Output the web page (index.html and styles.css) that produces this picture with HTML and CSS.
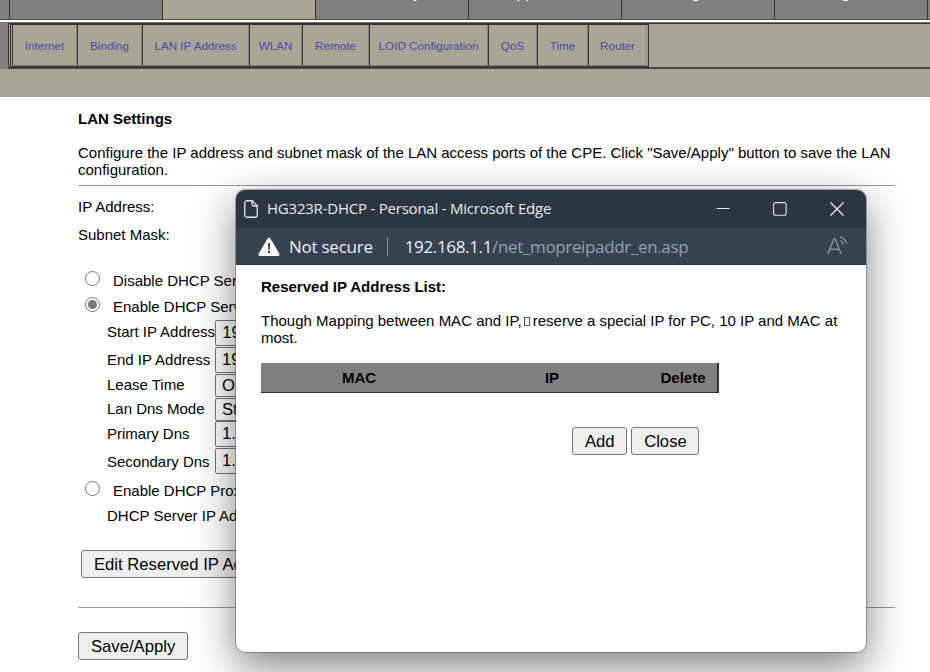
FILE: index.html
```html
<!DOCTYPE html>
<html lang="en">
<head>
<meta charset="utf-8">
<title>LAN Settings</title>
<link rel="stylesheet" href="styles.css">
</head>
<body>
<nav class="topnav">
  <div class="tab"><span>Status</span></div>
  <div class="tab tab-active"><span>Network</span></div>
  <div class="tab"><span>Security</span></div>
  <div class="tab"><span>Application</span></div>
  <div class="tab"><span>Management</span></div>
  <div class="tab"><span>Diagnose</span></div>
</nav>
<div class="topline"></div>
<div class="subwrap">
  <div class="subnav">
    <div class="subtable">
      <a class="cell c1">Internet</a>
      <a class="cell c2">Binding</a>
      <a class="cell c3">LAN IP Address</a>
      <a class="cell c4">WLAN</a>
      <a class="cell c5">Remote</a>
      <a class="cell c6">LOID Configuration</a>
      <a class="cell c7">QoS</a>
      <a class="cell c8">Time</a>
      <a class="cell c9">Router</a>
    </div>
  </div>
</div>
<div class="band"></div>
<main class="main">
  <h1 class="title">LAN Settings</h1>
  <p class="desc">Configure the IP address and subnet mask of the LAN access ports of the CPE. Click "Save/Apply" button to save the LAN configuration.</p>
  <div class="rule rule-top"></div>
  <div class="row row-ip">IP Address:</div>
  <div class="row row-ip">Subnet Mask:</div>
  <label class="radio-row rr1"><input type="radio" name="d"><span>Disable DHCP Server</span></label>
  <label class="radio-row rr2"><input type="radio" name="d" checked><span>Enable DHCP Server</span></label>
  <div class="dhcp">
    <div class="dhcp-row h27"><span class="lbl">Start IP Address</span><input class="fld" value="192.168.1.2"></div>
    <div class="dhcp-row h27"><span class="lbl lbl-flat">End IP Address</span><input class="fld" value="192.168.1.254"></div>
    <div class="dhcp-row h23 first-sel"><span class="lbl">Lease Time</span><select class="sel"><option>One Day</option></select></div>
    <div class="dhcp-row h24"><span class="lbl">Lan Dns Mode</span><select class="sel"><option>Static</option></select></div>
    <div class="dhcp-row h26"><span class="lbl">Primary Dns</span><input class="fld" value="1.1.1.1"></div>
    <div class="dhcp-row h28"><span class="lbl lbl-flat">Secondary Dns</span><input class="fld" value="1.0.0.1"></div>
  </div>
  <label class="radio-row rr3"><input type="radio" name="d"><span>Enable DHCP Proxy</span></label>
  <div class="row proxy-ip">DHCP Server IP Address</div>
  <button class="btn btn-edit" type="button">Edit Reserved IP Address</button>
  <div class="rule rule-bottom"></div>
  <button class="btn btn-save" type="button">Save/Apply</button>
</main>

<section class="win">
  <header class="win-title">
    <svg class="ico-doc" width="14" height="18" viewBox="0 0 14 18"><path d="M3 .75h5.2L13.25 5.8V15A2.25 2.25 0 0 1 11 17.25H3A2.25 2.25 0 0 1 .75 15V3A2.25 2.25 0 0 1 3 .75Z" fill="none" stroke="#e6e8ea" stroke-width="1.3"/><path d="M8 1v3.2A1.8 1.8 0 0 0 9.8 6H13" fill="none" stroke="#e6e8ea" stroke-width="1.3"/></svg>
    <span class="win-name">HG323R-DHCP - Personal - Microsoft Edge</span>
    <div class="win-ctrls">
      <svg width="14" height="14" viewBox="0 0 14 14"><path d="M.5 6.5h13" stroke="#eceef0" stroke-width="1.1"/></svg>
      <svg width="14" height="14" viewBox="0 0 14 14"><rect x=".6" y=".6" width="12.6" height="12.6" rx="2" fill="none" stroke="#dfe2e5" stroke-width="1.1"/></svg>
      <svg width="14" height="14" viewBox="0 0 14 14"><path d="M.5.5l13 13M13.5.5l-13 13" stroke="#f2f3f4" stroke-width="1.2"/></svg>
    </div>
  </header>
  <div class="win-addr">
    <svg class="ico-warn" width="22" height="19" viewBox="0 0 22 19"><path d="M11 .8a1.6 1.6 0 0 1 1.4.8l9 15.2a1.5 1.5 0 0 1-1.3 2.2H1.9a1.5 1.5 0 0 1-1.3-2.2l9-15.2A1.6 1.6 0 0 1 11 .8Z" fill="#fff"/><path d="M10 6.2h2l-.3 6.6h-1.4Z" fill="#2f3947"/><circle cx="11" cy="15" r="1.2" fill="#2f3947"/></svg>
    <span class="not-secure">Not secure</span>
    <span class="addr-sep"></span>
    <span class="url"><span class="url-host">192.168.1.1</span>/net_mopreipaddr_en.asp</span>
    <svg class="ico-read" width="21" height="20" viewBox="0 0 21 20"><path d="M.8 18 6.9 3h1.2l6.1 15M3 13.3h9" fill="none" stroke="#8b929c" stroke-width="1.4"/><path d="M13 1c3.4.8 5.6 3 6.4 6.4M12.8 4.4c1.8.5 3 1.7 3.5 3.6" fill="none" stroke="#8b929c" stroke-width="1.4"/></svg>
  </div>
  <div class="win-body">
    <h2 class="win-h">Reserved IP Address List:</h2>
    <p class="win-p">Though Mapping between MAC and IP,<span class="tofu"></span>reserve a special IP for PC, 10 IP and MAC at most.</p>
    <div class="list-head"><span>MAC</span><span>IP</span><span class="del">Delete</span></div>
    <div class="win-btns">
      <button class="btn btn-add" type="button">Add</button>
      <button class="btn btn-close" type="button">Close</button>
    </div>
  </div>
</section>
</body>
</html>
```
FILE: styles.css
```css
* { box-sizing: border-box; }
html, body { margin: 0; padding: 0; height: 672px; overflow: hidden; background: #fff; }
body { font-family: "Liberation Sans", Arial, sans-serif; font-size: 15px; color: #000; position: relative; }

/* top tabs */
.topnav { display: flex; height: 20px; padding-left: 9px; background: #808080; border-bottom: 1px solid #4a4a4a; overflow: hidden; }
.tab { flex: 0 0 153px; height: 19px; border-right: 1px solid #333; display: flex; justify-content: center; align-items: flex-end; padding-bottom: 18px; color: #fff; font-size: 16px; line-height: 16px; }
.tab:first-child { flex-basis: 154px; border-left: 1px solid #333; }
.tab-active { background: #a9a696; color: #a9a696; }
.topline { height: 3px; background: #fff; border-bottom: 1px solid #777; }

/* secondary nav */
.subwrap { background: #808080; padding-left: 8px; height: 46px; }
.subnav { height: 46px; background: #a9a696; border-top: 1px solid #333; border-left: 1px solid #333; border-bottom: 2px solid #444; padding-left: 1px; }
.subtable { display: flex; width: 639px; height: 43px; border: 1px solid #333; padding: 0 0 1px 1px; }
.cell { display: flex; align-items: center; justify-content: center; height: 41px; padding-top: 1px; border-left: 1px solid #333; border-right: 1px solid #808080; border-bottom: 1px solid #808080; color: #4a48a8; font-size: 11.67px; }
.c1 { width: 65px; } .c2 { width: 65px; } .c3 { width: 107px; } .c4 { width: 53px; } .c5 { width: 67px; }
.c6 { width: 119px; } .c7 { width: 49px; } .c8 { width: 51px; } .c9 { width: 59px; }
.band { height: 28px; background: #a9a696; }

/* main page */
.main { margin-left: 3px; padding: 13px 35px 0 75px; background: #fff; height: 575px; }
.title { margin: 0; font-size: 15px; line-height: 17px; font-weight: 700; }
.desc { margin: 17px 0 0; line-height: 17px; }
.rule { height: 1px; background: #999; }
.rule-top { margin-top: 7px; margin-bottom: 7px; }
.row { display: flex; align-items: center; height: 28px; padding-bottom: 2px; }
.radio-row { display: flex; align-items: center; height: 26px; }
.radio-row input { width: 15px; height: 15px; margin: 0 13px 5px 7px; flex: none; accent-color: #777; }
.radio-row span { padding-bottom: 2px; }
.rr1 { margin-top: 19px; }
.rr2 { height: 25px; }
.rr2 span { padding-bottom: 0; }
.dhcp { padding-left: 29px; }
.dhcp-row { display: flex; align-items: center; }
.h27 { height: 27px; } .h23 { height: 23px; } .h24 { height: 24px; } .h26 { height: 26px; } .h28 { height: 28px; }
.first-sel { margin-top: 1px; }
.lbl { flex: 0 0 108px; white-space: nowrap; padding-bottom: 2px; }
.lbl-flat { padding-bottom: 0; }
.fld { width: 200px; height: 26px; padding: 1px 6px; margin: 0; font: 16.67px "Liberation Sans", Arial, sans-serif; border: 1px solid #767676; border-radius: 2px; background: #fff; }
.sel { width: 200px; height: 23px; padding: 0 2px; margin: 0; font: 16.67px "Liberation Sans", Arial, sans-serif; border: 1px solid #767676; border-radius: 2px; background: #fff; }
.rr3 { margin-top: 3px; }
.proxy-ip { padding-left: 29px; height: 24px; }
.btn { font: 16.67px "Liberation Sans", Arial, sans-serif; color: #000; background: #efefef; border: 1px solid #767676; border-radius: 3px; height: 28px; padding: 2px 11.5px 0 12px; margin: 0; white-space: nowrap; display: block; }
.btn-edit { margin: 22px 0 0 3px; }
.rule-bottom { margin-top: 29px; }
.btn-save { margin-top: 24px; }

/* floating browser window */
.win { position: absolute; left: 236px; top: 190px; width: 630px; height: 462px; background: #fff; border-radius: 9px; overflow: hidden; box-shadow: 0 0 0 1px rgba(90,90,90,.5), 0 14px 42px rgba(0,0,0,.5); }
.win-title { display: flex; align-items: center; height: 38px; padding: 0 22px 0 8px; background: #2c3642; color: #e9ebed; }
.ico-doc { flex: none; margin-top: -1px; }
.win-name { margin: -2px 0 0 9px; font-family: "Open Sans", sans-serif; font-size: 15px; white-space: nowrap; letter-spacing: -.22px; }
.win-ctrls { margin-left: auto; display: flex; gap: 43px; }
.win-addr { display: flex; align-items: center; height: 37px; padding: 0 18px 0 22px; background: #364252; border-bottom: 1px solid #2c3642; color: #eef0f2; font-family: "Open Sans", sans-serif; }
.not-secure { margin-left: 9px; font-size: 17px; letter-spacing: -.25px; white-space: nowrap; }
.addr-sep { width: 1px; height: 19px; margin: 0 17px 0 14px; background: #8a929c; flex: none; }
.url { font-size: 17px; color: #98a0aa; white-space: nowrap; letter-spacing: -.35px; }
.url-host { color: #eef0f2; }
.ico-read { margin-left: auto; flex: none; }
.win-body { padding: 13px 25px 0; }
.win-h { margin: 0; font-size: 15px; line-height: 17px; font-weight: 700; }
.win-p { margin: 17px 0 0; line-height: 17px; }
.tofu { display: inline-block; width: 6px; height: 9px; margin: 0 3px 0 2px; border: 1px solid #555; }
.list-head { display: grid; grid-template-columns: 196px 190px 70px; width: 458px; height: 30px; margin-top: 17px; background: #808080; border-right: 2px solid #333; border-bottom: 1px solid #333; align-items: center; text-align: center; font-weight: 700; font-size: 15px; }
.del { padding-left: 2px; }
.win-btns { display: flex; gap: 4px; margin: 34px 0 0 311px; }
```
